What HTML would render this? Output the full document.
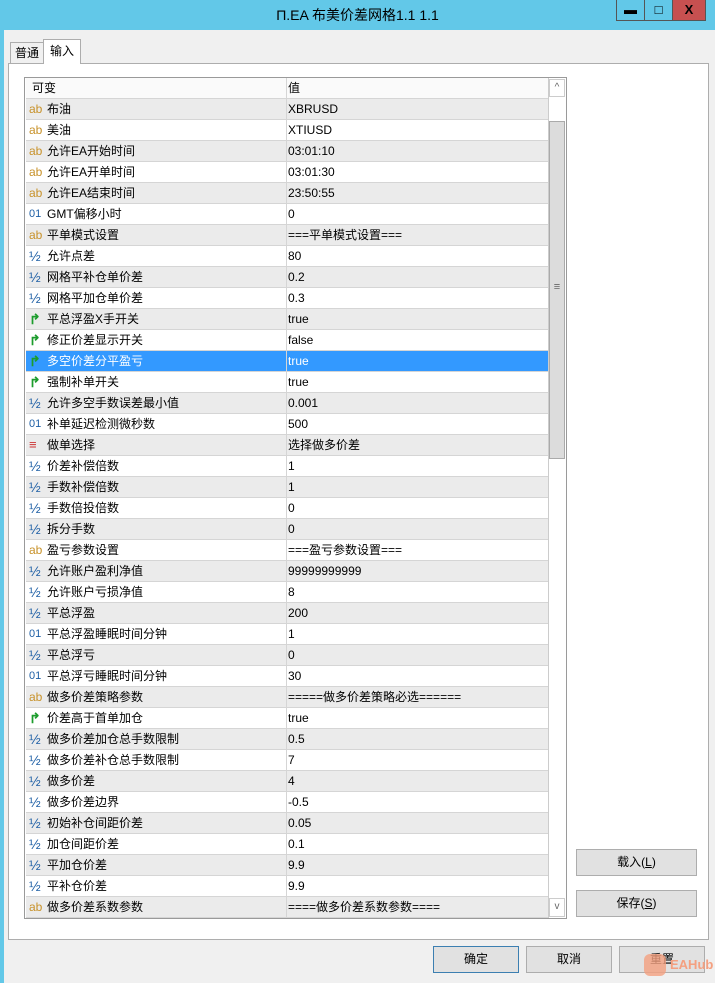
<!DOCTYPE html>
<html><head><meta charset="utf-8"><style>
*{margin:0;padding:0;box-sizing:border-box}
body{width:715px;height:983px;background:#62c8e8;font-family:"Liberation Sans","Noto Sans CJK SC",sans-serif;font-size:12px;color:#000;position:relative;overflow:hidden}
.title{position:absolute;left:0;top:0;width:715px;height:30px;text-align:center;line-height:30px;font-size:14px;color:#000}
.tb{position:absolute;top:0;height:21px;border:1px solid #555;border-top:none;background:#62c8e8;text-align:center;font-weight:bold;font-size:13px;line-height:19px}
.win{position:absolute;left:4px;top:30px;width:711px;height:953px;background:#f0f0f0}
.tab{position:absolute;border:1px solid #adadad;border-bottom:none;background:#f0f0f0;text-align:center}
.panel{position:absolute;left:8px;top:63px;width:701px;height:877px;border:1px solid #adadad;background:#fff}
.grid{position:absolute;left:24px;top:77px;width:543px;height:842px;border:1px solid #9a9a9a;background:#fff;overflow:hidden}
.row{position:absolute;left:1px;width:522px;height:21px;border-bottom:1px solid #d5d5d5}
.row span{position:absolute;top:0;line-height:20px;height:20px;white-space:nowrap}
.c1{left:21px}.c2{left:262px}
.row:before{content:"";position:absolute;left:260px;top:0;height:21px;border-left:1px solid #d5d5d5}
.g{background:#ebebeb}
.sel{background:#3399ff;color:#fff}
.row span.ic{left:3px;font-size:12px}
.ab{color:#c8922a}.n{color:#1e5fa5}
.btn{position:absolute;height:27px;border:1px solid #adadad;background:#e1e1e1;text-align:center;line-height:25px;font-size:12px}
</style></head><body>
<div class="title">П.EA 布美价差网格1.1 1.1</div>
<div class="tb" style="left:616px;width:29px">▬</div>
<div class="tb" style="left:644px;width:29px">□</div>
<div class="tb" style="left:672px;width:34px;background:#c75050;color:#000">X</div>
<div class="win"></div>
<div class="tab" style="left:10px;top:42px;width:34px;height:22px;line-height:20px">普通</div>
<div class="panel"></div>
<div class="tab" style="left:43px;top:39px;width:38px;height:25px;line-height:22px;background:#fff;z-index:2">输入</div>
<div class="grid">
<div class="row" style="top:0;height:21px;background:#fafafa"><span style="left:6px">可变</span><span class="c2">值</span></div>
<div id="rows"></div>
<div style="position:absolute;left:523px;top:0;width:18px;height:840px;background:#fff;border-left:1px solid #ccc"></div>
<div style="position:absolute;left:524px;top:1px;width:16px;height:18px;border:1px solid #ccc;text-align:center;font-size:10px;color:#666;line-height:16px">^</div>
<div style="position:absolute;left:524px;top:43px;width:16px;height:338px;background:#dcdcdc;border:1px solid #aaa;text-align:center;line-height:330px;color:#666;font-size:11px">≡</div>
<div style="position:absolute;left:524px;top:820px;width:16px;height:19px;border:1px solid #ccc;text-align:center;font-size:10px;color:#666;line-height:16px">v</div>
</div>
<div class="btn" style="left:576px;top:849px;width:121px">载入(<u>L</u>)</div>
<div class="btn" style="left:576px;top:890px;width:121px">保存(<u>S</u>)</div>
<div class="btn" style="left:433px;top:946px;width:86px;border-color:#3c7fb1">确定</div>
<div class="btn" style="left:526px;top:946px;width:86px">取消</div>
<div class="btn" style="left:619px;top:946px;width:86px">重置</div>
<div style="position:absolute;left:644px;top:954px;width:22px;height:22px;border-radius:6px;background:#f4a080;opacity:.8"></div>
<div style="position:absolute;left:670px;top:957px;color:#f4a080;font-weight:bold;font-size:13px">EAHub</div>
<script>
var d=[["ab","布油","XBRUSD"],["ab","美油","XTIUSD"],["ab","允许EA开始时间","03:01:10"],["ab","允许EA开单时间","03:01:30"],["ab","允许EA结束时间","23:50:55"],["01","GMT偏移小时","0"],["ab","平单模式设置","===平单模式设置==="],["h","允许点差","80"],["h","网格平补仓单价差","0.2"],["h","网格平加仓单价差","0.3"],["b","平总浮盈X手开关","true"],["b","修正价差显示开关","false"],["b","多空价差分平盈亏","true"],["b","强制补单开关","true"],["h","允许多空手数误差最小值","0.001"],["01","补单延迟检测微秒数","500"],["e","做单选择","选择做多价差"],["h","价差补偿倍数","1"],["h","手数补偿倍数","1"],["h","手数倍投倍数","0"],["h","拆分手数","0"],["ab","盈亏参数设置","===盈亏参数设置==="],["h","允许账户盈利净值","99999999999"],["h","允许账户亏损净值","8"],["h","平总浮盈","200"],["01","平总浮盈睡眠时间分钟","1"],["h","平总浮亏","0"],["01","平总浮亏睡眠时间分钟","30"],["ab","做多价差策略参数","=====做多价差策略必选======"],["b","价差高于首单加仓","true"],["h","做多价差加仓总手数限制","0.5"],["h","做多价差补仓总手数限制","7"],["h","做多价差","4"],["h","做多价差边界","-0.5"],["h","初始补仓间距价差","0.05"],["h","加仓间距价差","0.1"],["h","平加仓价差","9.9"],["h","平补仓价差","9.9"],["ab","做多价差系数参数","====做多价差系数参数===="]];
var h="";
d.forEach(function(r,i){
var cls=i==12?"sel":(i%2==0?"g":"");
var ic;
if(r[0]=="ab")ic='<span class="ic ab">ab</span>';
else if(r[0]=="01")ic='<span class="ic n" style="font-size:11px">01</span>';
else if(r[0]=="h")ic='<span class="ic n" style="font-size:14px">½</span>';
else if(r[0]=="b")ic='<span class="ic" style="color:#1c9c2c;font-weight:bold;font-size:14px">↱</span>';
else ic='<span class="ic" style="color:#c33;font-size:13px">≡</span>';
h+='<div class="row '+cls+'" style="top:'+(21+i*21)+'px">'+ic+'<span class="c1">'+r[1]+'</span><span class="c2">'+r[2]+'</span></div>';
});
document.getElementById("rows").innerHTML=h;
</script>
</body></html>
